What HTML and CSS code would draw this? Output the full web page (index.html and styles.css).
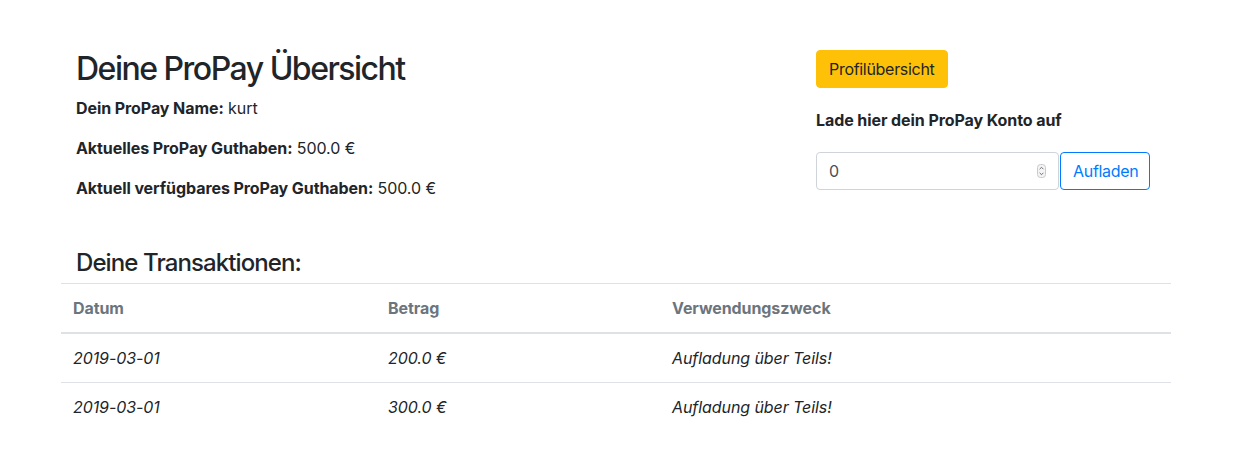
FILE: index.html
```html
<!DOCTYPE html>
<html lang="de">
<head>
<meta charset="utf-8">
<title>ProPay Übersicht</title>
<link rel="stylesheet" href="styles.css">
</head>
<body>
<main class="page">
  <section class="overview">
    <div class="info">
      <h2 class="title">Deine ProPay Übersicht</h2>
      <p class="line"><strong>Dein ProPay Name:</strong> kurt</p>
      <p class="line"><strong>Aktuelles ProPay Guthaben:</strong> 500.0 €</p>
      <p class="line"><strong>Aktuell verfügbares ProPay Guthaben:</strong> 500.0 €</p>
    </div>
    <div class="actions">
      <button class="btn btn-warning" type="button">Profilübersicht</button>
      <p class="charge-label">Lade hier dein ProPay Konto auf</p>
      <form class="charge-form">
        <div class="input-wrap">
          <input class="amount" type="text" value="0">
          <svg class="spinner" width="9" height="14" viewBox="0 0 9 14" aria-hidden="true">
            <rect x="0.5" y="0.5" width="8" height="13" rx="3" fill="#f4f4f5" stroke="#c7c9cc"/>
            <path d="M2.6 5.2 L4.5 3.3 L6.4 5.2" fill="none" stroke="#5c5f63" stroke-width="0.9"/>
            <path d="M2.6 8.8 L4.5 10.7 L6.4 8.8" fill="none" stroke="#5c5f63" stroke-width="0.9"/>
          </svg>
        </div>
        <button class="btn btn-outline-primary" type="button">Aufladen</button>
      </form>
    </div>
  </section>

  <h4 class="subtitle">Deine Transaktionen:</h4>
  <table class="table">
    <thead>
      <tr>
        <th class="col-date">Datum</th>
        <th class="col-amount">Betrag</th>
        <th>Verwendungszweck</th>
      </tr>
    </thead>
    <tbody>
      <tr>
        <td>2019-03-01</td>
        <td>200.0 €</td>
        <td>Aufladung über Teils!</td>
      </tr>
      <tr>
        <td>2019-03-01</td>
        <td>300.0 €</td>
        <td>Aufladung über Teils!</td>
      </tr>
    </tbody>
  </table>
</main>
</body>
</html>
```

FILE: styles.css
```css
* { box-sizing: border-box; }

html, body {
  margin: 0;
  padding: 0;
  background: #fff;
}

body {
  font-family: Inter, "Liberation Sans", Arial, sans-serif;
  font-size: 16px;
  line-height: 1.5;
  color: #212529;
  letter-spacing: -0.08px;
}

.page {
  width: 1110px;
  margin-left: 61px;
  padding-top: 50px;
}

.overview {
  display: flex;
  padding-left: 15px;
}

.info {
  width: 740px;
}

.title {
  margin: 0 0 8px;
  font-size: 32px;
  font-weight: 500;
  line-height: 1.2;
  letter-spacing: -1.5px;
}

.line {
  margin: 0 0 16px;
}

.line strong { font-weight: 700; }

.actions {
  display: flex;
  flex-direction: column;
  align-items: flex-start;
}

.btn {
  font-family: inherit;
  font-size: 16px;
  line-height: 24px;
  padding: 6px 12px;
  border-radius: 4px;
  border: 1px solid transparent;
  cursor: pointer;
  letter-spacing: -0.3px;
}

.btn-warning {
  background: #ffc107;
  border-color: #ffc107;
  color: #212529;
}

.btn-outline-primary {
  background: #fff;
  border-color: #007bff;
  color: #007bff;
}

.charge-label {
  margin: 20px 0 20px;
  font-weight: 700;
}

.charge-form {
  display: flex;
  gap: 1px;
}

.input-wrap {
  position: relative;
}

.amount {
  width: 243px;
  height: 38px;
  padding: 6px 12px;
  font-family: inherit;
  font-size: 16px;
  color: #495057;
  border: 1px solid #ced4da;
  border-radius: 4px;
  outline: none;
}

.spinner {
  position: absolute;
  right: 13px;
  top: 12px;
}

.charge-form .btn {
  width: 90px;
  height: 38px;
}

.subtitle {
  margin: 33px 0 5px 15px;
  font-size: 24px;
  font-weight: 500;
  line-height: 1.2;
  letter-spacing: -0.9px;
}

.table {
  width: 100%;
  border-collapse: collapse;
}

.table th,
.table td {
  padding: 12px;
  text-align: left;
  vertical-align: top;
  border-top: 1px solid #dee2e6;
}

.table thead th {
  color: #6c757d;
  font-weight: 700;
  border-bottom: 2px solid #dee2e6;
}

.table td {
  font-style: italic;
}

.col-date { width: 315px; }
.col-amount { width: 284px; }
```
